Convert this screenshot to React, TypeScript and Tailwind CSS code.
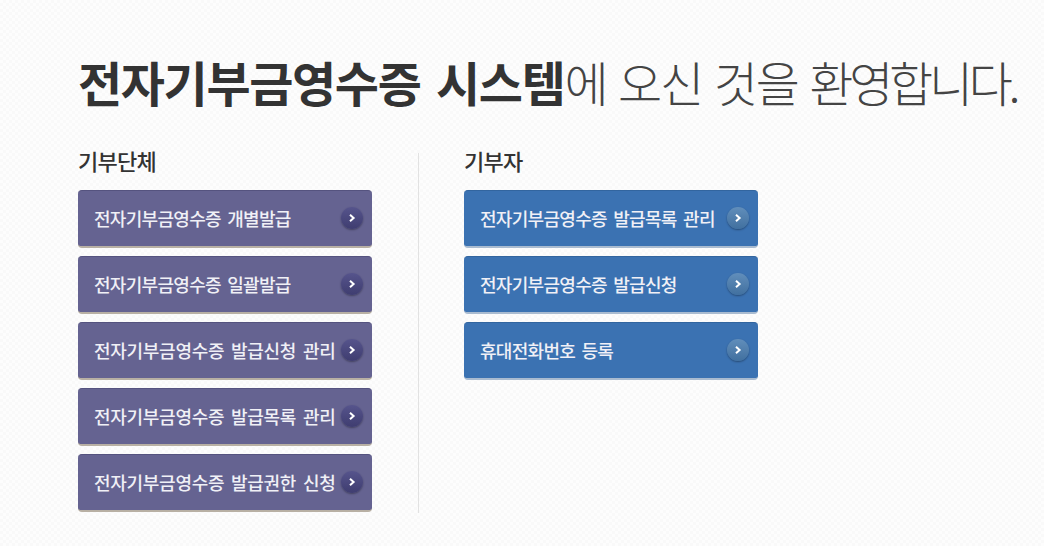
const donorOrgs = [
  { label: "전자기부금영수증 개별발급", tight: true },
  { label: "전자기부금영수증 일괄발급", tight: true },
  { label: "전자기부금영수증 발급신청 관리", tight: false },
  { label: "전자기부금영수증 발급목록 관리", tight: false },
  { label: "전자기부금영수증 발급권한 신청", tight: false },
];

const donors = [
  { label: "전자기부금영수증 발급목록 관리", tight: true },
  { label: "전자기부금영수증 발급신청", tight: true },
  { label: "휴대전화번호 등록", tight: true },
];

function Arrow({ circle }: { circle: string }) {
  return (
    <span
      className={`flex size-[22px] shrink-0 items-center justify-center rounded-full shadow-[0_1px_2px_rgba(0,0,0,0.35)] ${circle}`}
    >
      <svg width="10" height="10" viewBox="0 0 10 10" fill="none">
        <path d="M3 1.8 6.6 5 3 8.2" stroke="#ffffff" strokeWidth="2" />
      </svg>
    </span>
  );
}

function MenuButton({
  label,
  tight,
  color,
  circle,
}: {
  label: string;
  tight: boolean;
  color: string;
  circle: string;
}) {
  return (
    <a
      className={`flex h-[58px] w-[294px] items-center justify-between rounded-[4px] border-t border-b-2 pb-[1px] pl-4 pr-[9px] ${color}`}
    >
      <span
        className={`whitespace-nowrap text-[18px] font-medium text-[#f0f0f6] [word-spacing:3px] ${
          tight ? "tracking-[-0.7px]" : "tracking-[-0.28px]"
        }`}
      >
        {label}
      </span>
      <Arrow circle={circle} />
    </a>
  );
}

export default function App() {
  return (
    <div className="h-[546px] w-[1044px] overflow-hidden bg-[#fcfcfc] bg-[repeating-conic-gradient(#f9f9f9_0_25%,#fdfdfd_0_50%)] bg-[length:6px_6px] pl-[78px] pt-[48px] font-['Noto_Sans_CJK_KR','Noto_Sans',sans-serif]">
      <h1 className="h-[69px] whitespace-nowrap text-[48px] leading-[66px] text-[#333333]">
        <span className="font-bold tracking-[-1.35px] [word-spacing:6px]">전자기부금영수증 시스템</span>
        <span className="font-light tracking-[-2.1px] text-[#444444] [word-spacing:3px]">
          에 오신 것을 <span className="tracking-[-4.3px]">환영합니다.</span>
        </span>
      </h1>
      <div className="mt-[36px] flex">
        <section className="h-[360px] w-[341px] border-r border-[#e2e2e2]">
          <h2 className="h-[37px] text-[22px] font-medium leading-[15px] tracking-[-0.7px] text-[#333333]">
            기부단체
          </h2>
          <div className="flex flex-col gap-2">
            {donorOrgs.map((item) => (
              <MenuButton
                key={item.label}
                {...item}
                color="border-t-[#55537f] border-b-[#b8b0a4] bg-[#656391]"
                circle="bg-linear-to-b from-[#56548c] to-[#3f3d70]"
              />
            ))}
          </div>
        </section>
        <section className="ml-[45px]">
          <h2 className="h-[37px] text-[22px] font-medium leading-[15px] tracking-[-0.7px] text-[#333333]">
            기부자
          </h2>
          <div className="flex flex-col gap-2">
            {donors.map((item) => (
              <MenuButton
                key={item.label}
                {...item}
                color="border-t-[#32659f] border-b-[#a9bbd0] bg-[#3b72b2]"
                circle="bg-linear-to-b from-[#618ebb] to-[#41709f]"
              />
            ))}
          </div>
        </section>
      </div>
    </div>
  );
}
